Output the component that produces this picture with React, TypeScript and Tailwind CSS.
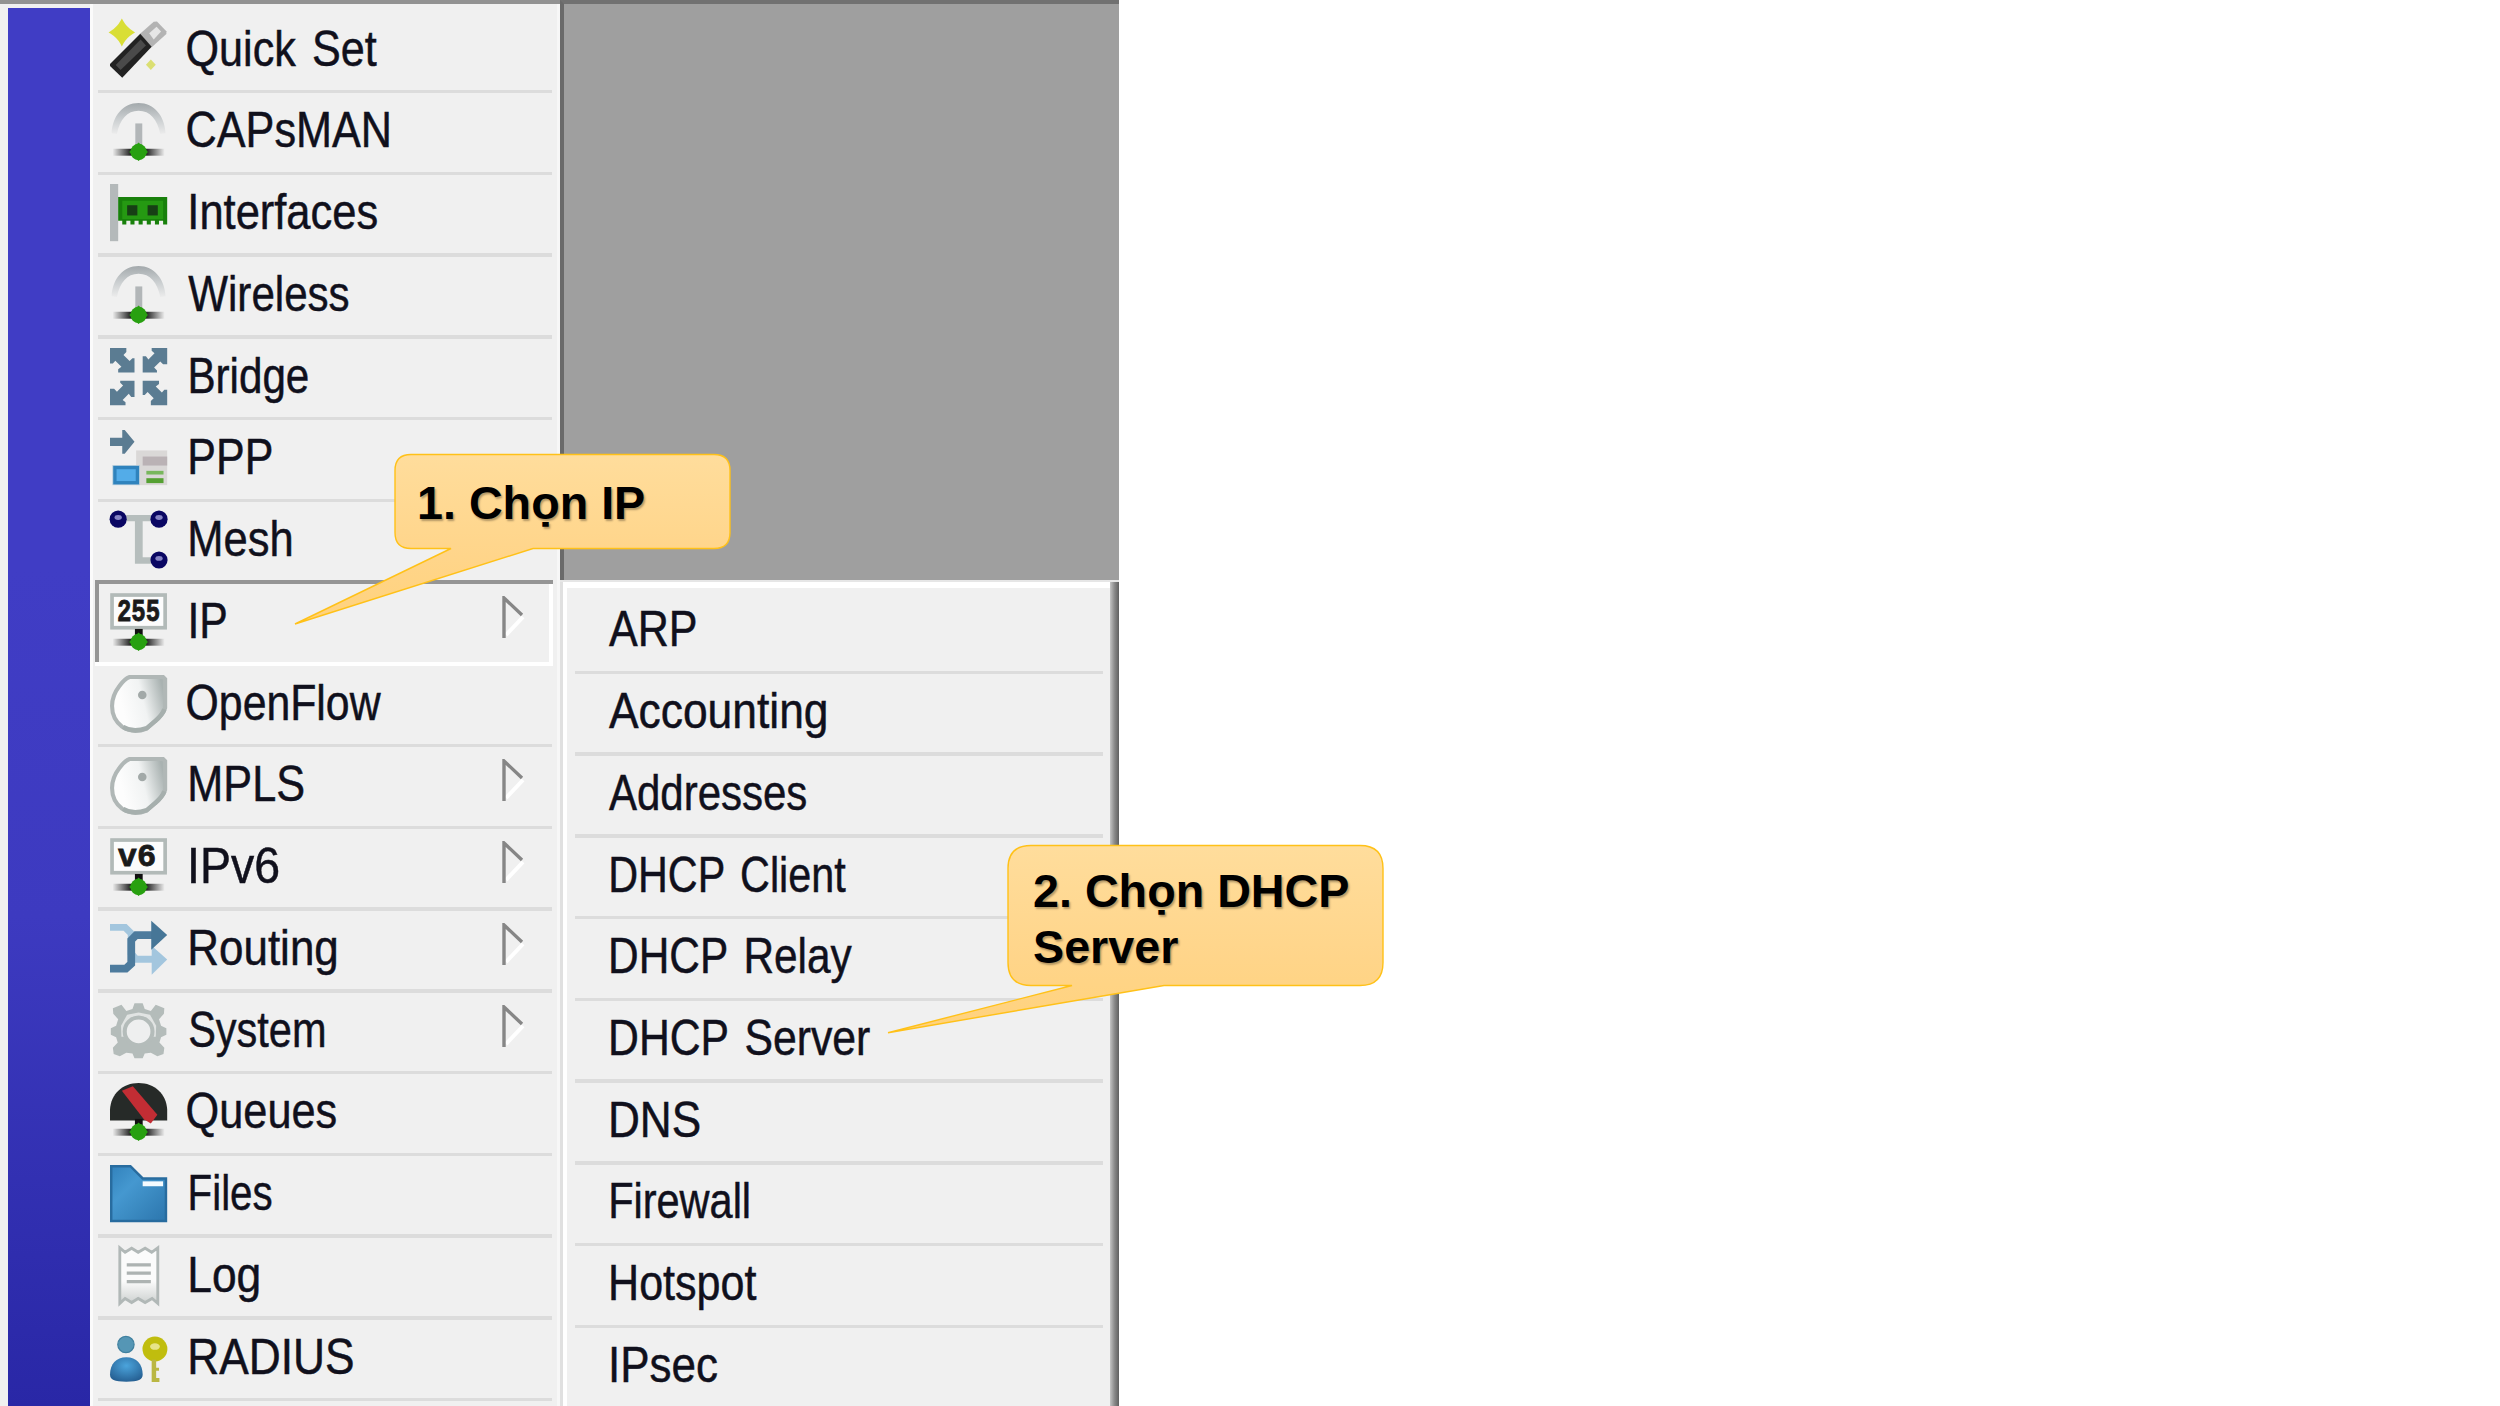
import React, { useMemo } from 'react';

const FONT = '50px "Liberation Sans"';

/** Menu caption whose visible glyphs start at `left` and span `width` pixels. */
function Caption({ text, left, width }: { text: string; left: number; width: number }) {
  const transform = useMemo(() => {
    const ctx = document.createElement('canvas').getContext('2d')!;
    ctx.font = FONT;
    ctx.wordSpacing = '5px';
    const m = ctx.measureText(text);
    const scale = width / (m.actualBoundingBoxRight + m.actualBoundingBoxLeft);
    return `translateX(${left + m.actualBoundingBoxLeft * scale}px) scaleX(${scale})`;
  }, [text, left, width]);
  return (
    <span
      className="block origin-left whitespace-pre font-['Liberation_Sans',Arial,sans-serif] text-[50px] leading-[57px] [word-spacing:5px] text-[#10101c] [-webkit-text-stroke:0.5px_#10101c]"
      style={{ transform }}
    >
      {text}
    </span>
  );
}

function Ground({ stub = true }: { stub?: boolean }) {
  return (
    <>
      <defs>
        <linearGradient id="ground" x1="0" x2="1" y1="0" y2="0">
          <stop offset="0" stopColor="#222" stopOpacity="0" />
          <stop offset="0.35" stopColor="#222" />
          <stop offset="0.65" stopColor="#222" />
          <stop offset="1" stopColor="#222" stopOpacity="0" />
        </linearGradient>
      </defs>
      <rect x="0.6" y="11.2" width="12.8" height="1.7" fill="url(#ground)" />
      {stub && <rect x="6.1" y="8.8" width="1.9" height="2" fill="#111" />}
      <path d="M7 9.700 9.300 12 7 14.200 4.700 12Z" fill="#28a010" />
      <circle cx="7" cy="12" r="2" fill="#28a010" />
    </>
  );
}

function Wireless() {
  return (
    <>
      <defs>
        <linearGradient id="dish" x1="0" x2="0" y1="0" y2="1">
          <stop offset="0" stopColor="#a3a9ac" />
          <stop offset="0.5" stopColor="#c9cdcf" />
          <stop offset="1" stopColor="#ececec" />
        </linearGradient>
      </defs>
      <path d="M.4 7.4C.6 3.2 3.2 0 7 0s6.400 3.200 6.600 7.400l-1.300.2C11.600 4 9.800 1.900 7 1.900S2.400 4 1.700 7.600Z" fill="url(#dish)" />
      <rect x="6.2" y="5" width="1.700" height="5.500" fill="#b2b6b8" />
      <Ground stub={false} />
    </>
  );
}

function Tag() {
  return (
    <>
      <defs>
        <linearGradient id="tag" x1="0.2" x2="1" y1="0.6" y2="0.4">
          <stop offset="0" stopColor="#fdfdfd" />
          <stop offset="0.5" stopColor="#f1f3f3" />
          <stop offset="1" stopColor="#a9b2b1" />
        </linearGradient>
      </defs>
      <path d="M4.800.5H13L13.500 1V8C13.200 9.300 12.200 10.300 11 11.400L9 13.100C7 13.900 4.700 13.800 3 12.700 1.400 11.500.5 9.600.5 7.600.5 5.600 1.300 4 2.300 2.700 3.100 1.600 3.900.8 4.800.5Z" fill="url(#tag)" stroke="#b0b7b6" strokeWidth="1" />
      <path d="M13.300 8.400C12.900 9.600 12 10.500 11 11.300L9 13C7 13.700 4.800 13.700 3.200 12.700" fill="none" stroke="#a6afad" strokeWidth="1.100" />
      <circle cx="7.900" cy="4.900" r="1.050" fill="#a2a9a8" />
    </>
  );
}

function Display({ label, x, length }: { label: string; x: number; length: number }) {
  return (
    <>
      <rect x="0.500" y="0.500" width="13" height="8" fill="#fcfcfc" stroke="#b2bab8" strokeWidth="0.900" />
      <text x={x} y="6.900" textLength={length} lengthAdjust="spacingAndGlyphs" fontFamily="Liberation Mono, monospace" fontWeight="bold" fontSize="7.600" fill="#1a1a1a" stroke="#1a1a1a" strokeWidth="0.200">
        {label}
      </text>
      <Ground />
    </>
  );
}

const icons: Record<string, React.ReactNode> = {
  wand: (
    <>
      <path d="M2.900.2C3.500 1.300 4.300 2.100 5.400 2.800 4.300 3.500 3.500 4.300 2.900 5.400 2.300 4.300 1.500 3.500.4 2.800 1.500 2.100 2.300 1.300 2.900.2Z" fill="#d9de35" stroke="#d9de35" strokeWidth="0.800" />
      <path d="M10 9.400 11.200 10.700 10 12 8.800 10.700Z" fill="#dbdf72" />
      <path d="M7.300 3.200 10.700.2 11.500.1 13.800 2.500V3.200L10.200 6.400Z" fill="#b3b3b3" />
      <path d="M9.600 3 11.400 1.400 12.500 2.600 10.700 4.500Z" fill="#e6e6e6" />
      <path d="M7.400 3.100 10.200 6.300 3 13.900 0 11V10.500Z" fill="#222" />
      <path d="M7.500 4.500 8.800 6 2.600 12 1.400 10.800Z" fill="#4a4a4a" />
    </>
  ),
  wireless: <Wireless />,
  card: (
    <>
      <rect width="2" height="14" fill="#b4b9ba" />
      <path d="M2 3.200H14V9.900H13V9H12V9.900H11V9H10V9.900H9V9H8V9.900H7V9H6V9.900H5V9H4V9.900H3V9H2Z" fill="#18800b" />
      <rect x="3" y="4.100" width="10" height="4.500" fill="#259912" />
      <rect x="4.200" y="5.200" width="2.500" height="2.500" fill="#173f15" />
      <rect x="9.200" y="5.200" width="2.500" height="2.500" fill="#173f15" />
    </>
  ),
  bridge: (
    <g fill="#5b7c92">
      {[0, 90, 180, 270].map((a) => (
        <path key={a} transform={`rotate(${a} 7 7)`} d="M0 0H4V1L3.300 1.700 4.800 3.200 5.500 2.500H6V6H2V5.200L2.800 4.600 1.300 3.100.7 3.800H0Z" />
      ))}
    </g>
  ),
  ppp: (
    <>
      <path d="M0 1.900H3V0H3.600L6 2.900 3.600 5.800H3V3.900H0Z" fill="#5b7c92" />
      <rect x="6.400" y="5" width="7.600" height="8.500" fill="#dad8d7" />
      <rect x="8" y="6.500" width="6" height="2.200" fill="#bab2b5" />
      <rect x="8.900" y="10" width="4.200" height="0.900" fill="#78b75c" />
      <rect x="8.900" y="11.800" width="4.200" height="1.200" fill="#55a032" />
      <rect x="0.600" y="8.600" width="6.700" height="4.900" fill="#a9c7da" />
      <rect x="1.200" y="9.200" width="5.500" height="3.700" fill="#53ace8" stroke="#2f83bd" strokeWidth="0.800" />
    </>
  ),
  mesh: (
    <>
      <path d="M4 1H10V2.500H8V11.300H10V12.900H6.100V2.500H4Z" fill="#b6bebd" />
      {[[2, 2], [12, 2], [12, 12]].map(([x, y]) => (
        <g key={`${x}-${y}`}>
          <circle cx={x} cy={y} r="2.100" fill="#0a0763" />
          <ellipse cx={x} cy={y - 0.400} rx="0.900" ry="0.600" fill="#8583c4" />
        </g>
      ))}
    </>
  ),
  ip: <Display label="255" x={1.700} length={10.600} />,
  tag: <Tag />,
  ipv6: <Display label="v6" x={1.900} length={9.400} />,
  routing: (
    <>
      <path d="M0 1.800H3.700L5.200 3.300V8.200L6.400 9.600H10.500" fill="none" stroke="#a3c6de" strokeWidth="1.700" />
      <path d="M10.200 6.300 14 9.700 10.200 13.400Z" fill="#a3c6de" />
      <path d="M0 11.900H3.900L5.200 10.700V4.900L6.400 3.700H10.500" fill="none" stroke="#4d7b9d" strokeWidth="1.900" />
      <path d="M10.100.2 14 3.700 10.100 7.300Z" fill="#467697" />
    </>
  ),
  gear: (
    <>
      <path d="M6 .3H8L8.500 1.700 10 2.200 11.200.7 13.300 1.500 13.200 2.900 12 4.200 12.500 5.800 13.800 6.400V8L12.500 8.600 12.100 9.900 13.300 11.200 13.100 12.700 11.600 13.300 10 12.400 8.500 12.600 8 13.800H6L5.500 12.600 4 12.400 2.400 13.300.9 12.700.7 11.200 1.900 9.900 1.500 8.600.2 8V6.400L1.500 5.800 2 4.200.8 2.900.7 1.500 2.800.7 4 2.200 5.500 1.700Z" fill="#b4bcba" />
      <path d="M4.200 3.100 7 2.600 9.800 3.100 11.300 5.800 11.200 8.500H2.800L2.700 5.800Z" fill="#e1e4e3" />
      <circle cx="7" cy="7.200" r="3.400" fill="#eeefef" stroke="#b4bcba" strokeWidth="1" />
    </>
  ),
  queue: (
    <>
      <path d="M0 9.200V6.500C.2 2.700 3.100 0 7 0S13.800 2.700 14 6.500V9.200Z" fill="#262a28" />
      <path d="M2.900 1.900 5.600.8 11.600 7.800 10 9.900 8.300 8.900Z" fill="#c22d34" />
      <Ground />
    </>
  ),
  folder: (
    <>
      <defs>
        <linearGradient id="folder" x1="0" x2="1" y1="0" y2="1">
          <stop offset="0" stopColor="#3282bc" />
          <stop offset="0.350" stopColor="#4598d0" />
          <stop offset="1" stopColor="#2c76ad" />
        </linearGradient>
      </defs>
      <path d="M.3.3H5L8 3.300H13.700V13.700H.3Z" fill="url(#folder)" stroke="#286c9f" strokeWidth="0.600" />
      <rect x="8" y="4" width="5" height="1.200" fill="#f4fbff" />
    </>
  ),
  log: (
    <>
      <defs>
        <linearGradient id="paper" x1="0" x2="0" y1="0" y2="1">
          <stop offset="0.600" stopColor="#fbfbfb" />
          <stop offset="1" stopColor="#cdd1d0" />
        </linearGradient>
      </defs>
      <path d="M2.400.2 3.700 1.300 5.300.3 6.900 1.300 8.600.3 10.200 1.300 11.700.2V13.800L10.300 12.600 8.600 13.600 6.900 12.600 5.300 13.600 3.700 12.600 2.400 13.800Z" fill="url(#paper)" stroke="#b1b8b7" strokeWidth="0.700" />
      <path d="M4.100 4.400H10M4.100 6.400H10M4.100 8.500H10" stroke="#adb3b2" strokeWidth="0.800" />
    </>
  ),
  radius: (
    <>
      <defs>
        <radialGradient id="person" cx="0.500" cy="0.350" r="0.700">
          <stop offset="0" stopColor="#4ba4dc" />
          <stop offset="1" stopColor="#245d90" />
        </radialGradient>
      </defs>
      <path d="M0 11.200C0 8.600 1.500 6.900 4 6.900S8 8.600 8 11.200C8 12.300 7 12.900 4 12.900S0 12.300 0 11.200Z" fill="url(#person)" />
      <circle cx="3.900" cy="3.800" r="2" fill="#5596b5" stroke="#40809f" strokeWidth="0.300" />
      <circle cx="11" cy="4.900" r="3.050" fill="#c0bd0e" />
      <ellipse cx="11" cy="4.300" rx="1.200" ry="0.800" fill="#e7e48a" />
      <path d="M10.200 7.500H11.300V9.500H12V10.200H11.300V12H12.100V13H10.200Z" fill="#bab743" />
    </>
  ),
};

type Item = { icon: string; text: string; left: number; right: number; arrow?: boolean; frame?: 'above' | 'selected' };

const menu: Item[] = [
  { icon: 'wand', text: 'Quick Set', left: 187, right: 376.500 },
  { icon: 'wireless', text: 'CAPsMAN', left: 187, right: 389 },
  { icon: 'card', text: 'Interfaces', left: 190.500, right: 377 },
  { icon: 'wireless', text: 'Wireless', left: 188, right: 348.500 },
  { icon: 'bridge', text: 'Bridge', left: 190.500, right: 307.500 },
  { icon: 'ppp', text: 'PPP', left: 190.500, right: 271 },
  { icon: 'mesh', text: 'Mesh', left: 190.500, right: 291, frame: 'above' },
  { icon: 'ip', text: 'IP', left: 190.500, right: 225.500, arrow: true, frame: 'selected' },
  { icon: 'tag', text: 'OpenFlow', left: 187, right: 381 },
  { icon: 'tag', text: 'MPLS', left: 190.500, right: 303.500, arrow: true },
  { icon: 'ipv6', text: 'IPv6', left: 190.500, right: 278, arrow: true },
  { icon: 'routing', text: 'Routing', left: 190.500, right: 336, arrow: true },
  { icon: 'gear', text: 'System', left: 189.500, right: 324, arrow: true },
  { icon: 'queue', text: 'Queues', left: 187, right: 336 },
  { icon: 'folder', text: 'Files', left: 190.500, right: 271.500 },
  { icon: 'log', text: 'Log', left: 190.500, right: 258.500 },
  { icon: 'radius', text: 'RADIUS', left: 190.500, right: 353 },
];

const submenu = [
  { text: 'ARP', left: 608.500, right: 695 },
  { text: 'Accounting', left: 608.500, right: 825.500 },
  { text: 'Addresses', left: 608.500, right: 806 },
  { text: 'DHCP Client', left: 611, right: 846 },
  { text: 'DHCP Relay', left: 611, right: 852 },
  { text: 'DHCP Server', left: 611, right: 870 },
  { text: 'DNS', left: 611, right: 699.500 },
  { text: 'Firewall', left: 611, right: 748 },
  { text: 'Hotspot', left: 611, right: 756 },
  { text: 'IPsec', left: 611, right: 716.500 },
];

function MenuRow({ item }: { item: Item }) {
  const selected = item.frame === 'selected';
  const line = selected ? 'bg-white' : item.frame === 'above' ? 'bg-[#959595]' : 'bg-[#dcdcdc]';
  const inset = item.frame ? 'ml-[2px] mr-[4px]' : 'ml-[5px] mr-[5px]';
  return (
    <div className="flex h-[81.740px] shrink-0 flex-col">
      <div className={`flex min-h-0 flex-1 ${selected ? 'ml-[2px] mr-[4px] border-l-4 border-r-4 border-l-[#959595] border-r-white' : ''}`}>
        <svg viewBox="0 0 14 14" className={`mt-[9.200px] h-[57.200px] w-[57.200px] shrink-0 overflow-visible ${selected ? 'ml-[11px]' : 'ml-[17px]'}`}>
          {icons[item.icon]}
        </svg>
        <div className="mt-[9px] w-0">
          <Caption text={item.text} left={item.left - 166.700} width={item.right - item.left} />
        </div>
        {item.arrow && (
          <svg viewBox="0 0 24 42" className="ml-[334.300px] mt-[12px] h-[42px] w-[24px] shrink-0">
            <path d="M5 39 22 21" stroke="#fff" strokeWidth="4" />
            <path d="M3 42V2L21 19" fill="none" stroke="#868686" strokeWidth="3.400" />
          </svg>
        )}
      </div>
      <div className={`h-[3.500px] shrink-0 ${line} ${inset}`} />
    </div>
  );
}

function Balloon({ path, gradient, children, className }: { path: string; gradient: [number, number]; children: React.ReactNode; className: string }) {
  const id = `balloon-${gradient[0]}`;
  return (
    <>
      <svg viewBox="0 0 2500 1406" className="pointer-events-none absolute inset-0 h-[1406px] w-[2500px]">
        <defs>
          <linearGradient id={id} gradientUnits="userSpaceOnUse" x1="0" x2="0" y1={gradient[0]} y2={gradient[1]}>
            <stop offset="0" stopColor="#ffdd9c" />
            <stop offset="0.600" stopColor="#ffd58a" />
            <stop offset="1" stopColor="#ffd27c" />
          </linearGradient>
        </defs>
        <path d={path} fill={`url(#${id})`} stroke="#ffc118" strokeWidth="1.400" />
      </svg>
      <div className={`absolute whitespace-nowrap font-['Liberation_Sans',Arial,sans-serif] text-[46.700px] font-bold leading-[56px] text-black [text-shadow:1.500px_1.500px_2px_rgba(0,0,0,0.3)] ${className}`}>
        {children}
      </div>
    </>
  );
}

export default function App() {
  return (
    <div className="relative flex h-[1406px] w-[2500px] overflow-hidden bg-white">
      <div className="flex w-[560px] shrink-0 flex-col border-t-4 border-t-[#929292] bg-[#f0f0f0]">
        <div className="flex min-h-0 flex-1">
          <div className="mt-[4px] ml-[8px] w-[82px] shrink-0 bg-linear-to-b from-[#403dc5] from-40% via-[#3d3ac0] via-65% to-[#2927a6]" />
          <div className="w-[3px] shrink-0 bg-[#fbfbfb]" />
          <div className="flex min-w-0 flex-1 flex-col pt-[7.760px]">
            {menu.map((item) => (
              <MenuRow key={item.text} item={item} />
            ))}
          </div>
          <div className="w-[3px] shrink-0 bg-[#f7f7f7]" />
        </div>
      </div>
      <div className="flex w-[559px] shrink-0 flex-col">
        <div className="h-[580px] shrink-0 border-l-4 border-t-4 border-l-[#6a6a6a] border-t-[#717171] bg-[#9f9f9f]" />
        <div className="flex min-h-0 flex-1 border-t-2 border-t-[#e6e6e6]">
          <div className="w-[3px] shrink-0 bg-[#e0e0e0]" />
          <div className="flex min-w-0 flex-1 flex-col border-l-4 border-t-[6px] border-white bg-[#f0f0f0]">
            <div className="h-[4.500px] shrink-0" />
            {submenu.map((item) => (
              <div key={item.text} className="flex h-[81.740px] shrink-0 flex-col">
                <div className="min-h-0 flex-1 pt-[8.800px]">
                  <Caption text={item.text} left={item.left - 566.500} width={item.right - item.left} />
                </div>
                <div className="ml-[8px] mr-[7px] h-[3.500px] shrink-0 bg-[#dcdcdc]" />
              </div>
            ))}
          </div>
          <div className="w-[9px] shrink-0 bg-linear-to-r from-[#c4c4c4] via-[#8a8a8a] to-[#606060]" />
        </div>
      </div>

      <Balloon
        gradient={[454, 624]}
        path="M411 454.500H714Q730 454.500 730 470.500V532.500Q730 548.500 714 548.500H533L295 624 451 548.500H411Q395 548.500 395 532.500V470.500Q395 454.500 411 454.500Z"
        className="left-[417px] top-[475px]"
      >
        1. Chọn IP
      </Balloon>
      <Balloon
        gradient={[845, 1033]}
        path="M1031 845.500H1360Q1383 845.500 1383 868.500V962.500Q1383 985.500 1360 985.500H1164L888 1032.700 1072 985.500H1031Q1008 985.500 1008 962.500V868.500Q1008 845.500 1031 845.500Z"
        className="left-[1033px] top-[862.500px]"
      >
        2. Chọn DHCP
        <br />
        Server
      </Balloon>
    </div>
  );
}
